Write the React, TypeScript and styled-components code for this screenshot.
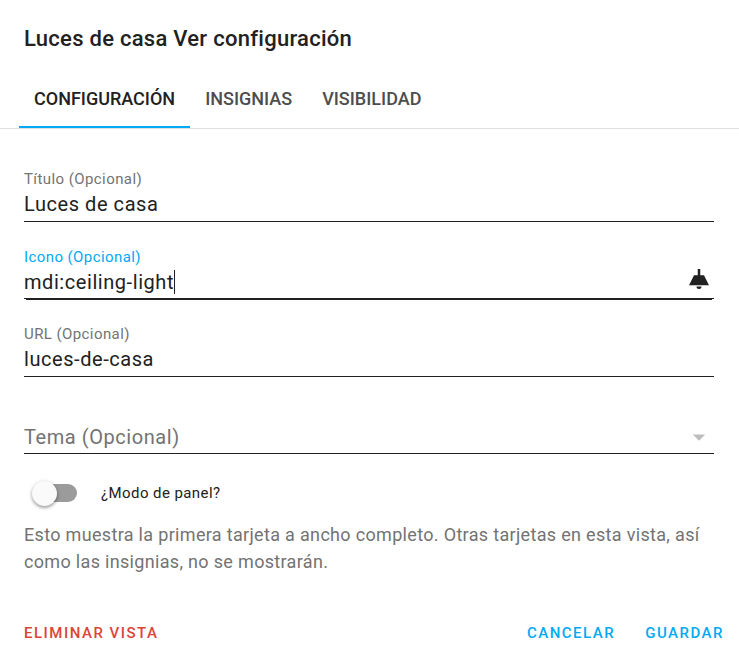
import React, { useState } from 'react';
import styled, { createGlobalStyle } from 'styled-components';

const Global = createGlobalStyle`
  * { box-sizing: border-box; }
  body { margin: 0; background: #fff; color: #212121; font-family: Roboto, "Liberation Sans", sans-serif; }
  button, input, select { font-family: inherit; }
`;

const Dialog = styled.form`
  display: flex;
  flex-direction: column;
`;
const Title = styled.h2`
  margin: 0;
  padding: 23px 24px 0;
  font-size: 22px;
  line-height: 32px;
  font-weight: 500;
  letter-spacing: 0.0125em;
`;
const Tabs = styled.div`
  display: flex;
  margin-top: 15px;
  padding: 0 19px;
  border-bottom: 1px solid #e0e0e0;
`;
const Tab = styled.button<{ $active: boolean }>`
  height: 58px;
  padding: 0 15px;
  border: 0;
  border-bottom: 2px solid ${p => (p.$active ? '#03a9f4' : 'transparent')};
  background: none;
  color: ${p => (p.$active ? '#212121' : '#4d4d4d')};
  font-size: 18px;
  font-weight: 500;
  text-transform: uppercase;
  cursor: pointer;
`;
const Content = styled.div`
  display: flex;
  flex-direction: column;
  padding: 40px 25px 0 24px;
`;
const Field = styled.div`
  display: flex;
  flex-direction: column;
  margin-bottom: 25px;
`;
const Label = styled.label<{ $focused?: boolean }>`
  font-size: 15px;
  line-height: 20px;
  letter-spacing: 0.028em;
  color: ${p => (p.$focused ? '#03a9f4' : '#737373')};
`;
const Line = styled.div<{ $focused?: boolean }>`
  position: relative;
  display: flex;
  align-items: flex-start;
  height: ${p => (p.$focused ? 32 : 33)}px;
  border-bottom: 1px solid #212121;

  &::after {
    content: '';
    display: ${p => (p.$focused ? 'block' : 'none')};
    position: absolute;
    left: 2px;
    right: 2px;
    top: 100%;
    margin-top: 1px;
    height: 1px;
    background: #212121;
  }
`;
const SelectLine = styled(Line)`
  height: 32px;
  margin-top: 20px;
`;
const Input = styled.input`
  flex: 1;
  min-width: 0;
  height: 30px;
  padding: 0;
  border: 0;
  outline: 0;
  background: none;
  color: #212121;
  font-size: 20px;
  letter-spacing: 0.028em;
`;
const FittedInput = styled(Input)`
  flex: none;
  field-sizing: content;
  caret-color: transparent;
`;
const Caret = styled.span`
  width: 1px;
  height: 24px;
  margin: 3px auto 0 0;
  background: #212121;
`;
const Select = styled.select`
  flex: 1;
  height: 30px;
  padding: 0;
  border: 0;
  outline: 0;
  appearance: none;
  background: none;
  color: #737373;
  font-size: 20px;
  letter-spacing: 0.028em;
`;
const LampIcon = styled.svg`
  width: 30px;
  height: 30px;
  margin-top: -3px;
  fill: #212121;
`;
const ArrowIcon = styled.svg`
  width: 30px;
  height: 30px;
  fill: #bdbdbd;
  pointer-events: none;
`;
const SwitchRow = styled.label`
  display: flex;
  align-items: center;
  gap: 24px;
  height: 28px;
  padding-left: 8px;
  font-size: 15px;
  letter-spacing: 0.028em;
  cursor: pointer;
`;
const Switch = styled.input`
  appearance: none;
  position: relative;
  width: 41px;
  height: 18px;
  margin: 0 0 0 4px;
  border-radius: 9px;
  background: #9b9b9b;
  cursor: pointer;

  &::before {
    content: '';
    position: absolute;
    top: -3px;
    left: -4px;
    width: 25px;
    height: 25px;
    border-radius: 50%;
    background: #fafafa;
    box-shadow: 0 2px 3px rgba(0, 0, 0, 0.25), 0 1px 4px rgba(0, 0, 0, 0.2);
  }
  &:checked { background: #81d4fa; }
  &:checked::before { left: 20px; background: #03a9f4; }
`;
const Help = styled.p`
  margin: 14px 0 0;
  color: #737373;
  font-size: 18px;
  line-height: 27px;
  letter-spacing: 0.018em;
`;
const Actions = styled.div`
  display: flex;
  gap: 30px;
  padding: 49px 15px 16px 24px;
`;
const Action = styled.button<{ $warning?: boolean }>`
  margin-right: ${p => (p.$warning ? 'auto' : 0)};
  padding: 0;
  border: 0;
  background: none;
  color: ${p => (p.$warning ? '#db4437' : '#03a9f4')};
  font-size: 15px;
  line-height: 18px;
  font-weight: 500;
  letter-spacing: 0.1em;
  text-transform: uppercase;
  cursor: pointer;
`;

const tabs = ['Configuración', 'Insignias', 'Visibilidad'];

export default function App() {
  const [tab, setTab] = useState(tabs[0]);
  return (
    <>
      <Global />
      <Dialog onSubmit={e => e.preventDefault()}>
        <Title>Luces de casa Ver configuración</Title>
        <Tabs role="tablist">
          {tabs.map(t => (
            <Tab key={t} type="button" role="tab" aria-selected={t === tab} $active={t === tab} onClick={() => setTab(t)}>
              {t}
            </Tab>
          ))}
        </Tabs>
        <Content>
          <Field>
            <Label htmlFor="title">Título (Opcional)</Label>
            <Line><Input id="title" defaultValue="Luces de casa" /></Line>
          </Field>
          <Field>
            <Label $focused htmlFor="icon">Icono (Opcional)</Label>
            <Line $focused>
              <FittedInput id="icon" defaultValue="mdi:ceiling-light" />
              <Caret aria-hidden="true" />
              <LampIcon viewBox="0 0 24 24" aria-hidden="true">
                <path d="M8,9H11V4H13V9H16L20,17H4L8,9M14,18A2,2 0 0,1 12,20A2,2 0 0,1 10,18H14Z" />
              </LampIcon>
            </Line>
          </Field>
          <Field>
            <Label htmlFor="url">URL (Opcional)</Label>
            <Line><Input id="url" defaultValue="luces-de-casa" /></Line>
          </Field>
          <Field>
            <SelectLine>
              <Select aria-label="Tema (Opcional)"><option>Tema (Opcional)</option></Select>
              <ArrowIcon viewBox="0 0 24 24" aria-hidden="true"><path d="M7,10L12,15L17,10H7Z" /></ArrowIcon>
            </SelectLine>
          </Field>
          <SwitchRow><Switch type="checkbox" role="switch" />¿Modo de panel?</SwitchRow>
          <Help>
            Esto muestra la primera tarjeta a ancho completo. Otras tarjetas en esta vista, así como las insignias, no se mostrarán.
          </Help>
        </Content>
        <Actions>
          <Action type="button" $warning>Eliminar vista</Action>
          <Action type="button">Cancelar</Action>
          <Action type="submit">Guardar</Action>
        </Actions>
      </Dialog>
    </>
  );
}
